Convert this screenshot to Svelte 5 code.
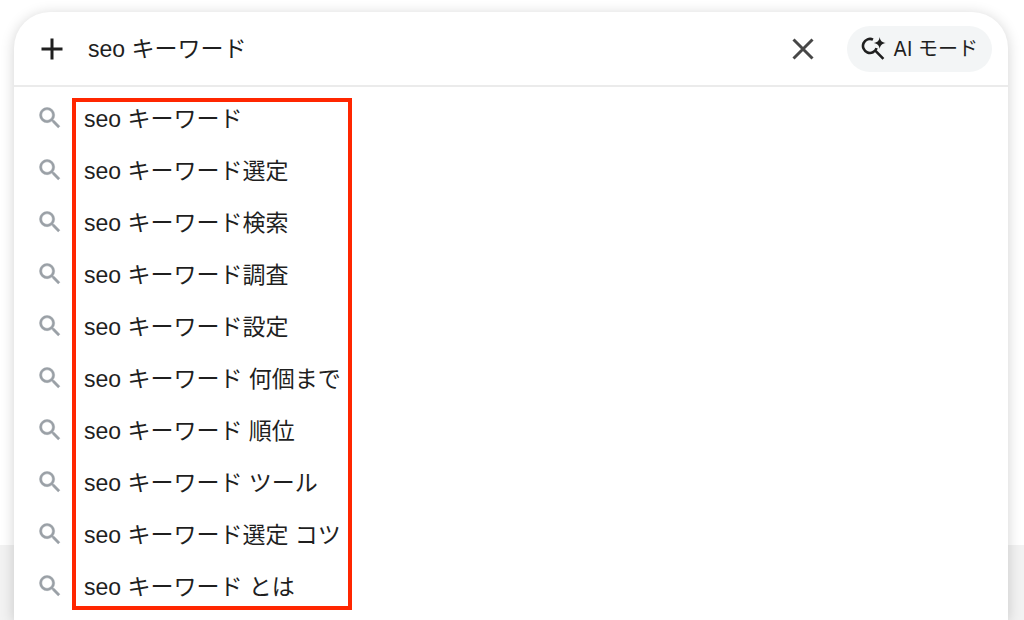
<script lang="ts">
  let query = $state('seo キーワード');

  const suggestions = [
    'seo キーワード',
    'seo キーワード選定',
    'seo キーワード検索',
    'seo キーワード調査',
    'seo キーワード設定',
    'seo キーワード 何個まで',
    'seo キーワード 順位',
    'seo キーワード ツール',
    'seo キーワード選定 コツ',
    'seo キーワード とは',
  ];
</script>

<div class="page">
  <div class="footer-band"></div>

  <main class="panel">
    <form class="bar" role="search" onsubmit={(e) => e.preventDefault()}>
      <button type="button" class="icon-btn" aria-label="追加">
        <svg width="24" height="24" viewBox="0 0 24 24">
          <path d="M12 1.5v21M1.5 12h21" stroke="#1f1f1f" stroke-width="3" />
        </svg>
      </button>
      <input type="text" aria-label="検索" autocomplete="off" bind:value={query} />
      <button type="button" class="icon-btn" aria-label="クリア" onclick={() => (query = '')}>
        <svg width="24" height="24" viewBox="0 0 24 24">
          <path d="M2.5 2.5l19 19M21.5 2.5l-19 19" stroke="#474747" stroke-width="3" />
        </svg>
      </button>
      <button type="button" class="ai">
        <svg width="26" height="26" viewBox="0 0 26 26">
          <path
            d="M12 3.6A7 7 0 1 0 15.6 12.2M13.8 14.2L22.4 22.8"
            fill="none"
            stroke="#1f1f1f"
            stroke-width="2.6"
          />
          <path
            d="M18.7 .9C19.2 4.6 20.8 6.2 24.8 7C20.8 7.8 19.2 9.4 18.7 13.1C18.2 9.4 16.6 7.8 12.6 7C16.6 6.2 18.2 4.6 18.7 .9Z"
            fill="#1f1f1f"
          />
        </svg>
        <span>AI モード</span>
      </button>
    </form>

    <div class="results">
      <ul>
        {#each suggestions as text (text)}
          <li>
            <button type="button" class="row" onclick={() => (query = text)}>
              <svg width="28" height="28" viewBox="0 0 24 24">
                <path
                  fill="#9aa0a6"
                  stroke="#9aa0a6"
                  stroke-width="0.4"
                  d="M15.5 14h-.79l-.28-.27A6.471 6.471 0 0 0 16 9.5 6.5 6.5 0 1 0 9.5 16c1.61 0 3.09-.59 4.23-1.57l.27.28v.79l5 4.99L20.49 19l-4.99-5zm-6 0C7.01 14 5 11.99 5 9.5S7.01 5 9.5 5 14 7.01 14 9.5 11.99 14 9.5 14z"
                />
              </svg>
              <span>{text}</span>
            </button>
          </li>
        {/each}
      </ul>
      <div class="marker"></div>
    </div>
  </main>
</div>

<style>
  :global(body) {
    background: #fff;
  }
  .page {
    position: relative;
    box-sizing: border-box;
    min-height: 100vh;
    padding: 12px 16px 0 14px;
    display: flex;
    overflow: hidden;
    font-family: 'Liberation Sans', 'Noto Sans CJK JP', sans-serif;
    color: #1f1f1f;
  }
  .footer-band {
    position: absolute;
    left: 0;
    right: 0;
    bottom: 0;
    height: 75px;
    background: #f2f2f2;
  }
  .panel {
    position: relative;
    flex: 1;
    min-width: 0;
    background: #fff;
    border-radius: 36px 36px 0 0;
    box-shadow: 0 2px 14px rgba(0, 0, 0, 0.18);
  }
  button {
    border: 0;
    padding: 0;
    background: none;
    color: inherit;
    font: inherit;
    cursor: pointer;
  }
  svg {
    display: block;
    flex: none;
  }
  .bar {
    display: flex;
    align-items: center;
    height: 73px;
    padding: 0 16px 0 26px;
    border-bottom: 2px solid #ebebeb;
  }
  .bar input {
    flex: 1;
    min-width: 0;
    margin-left: 24px;
    padding: 0;
    border: 0;
    outline: 0;
    background: none;
    color: inherit;
    font-family: inherit;
    font-size: 23px;
    line-height: 36px;
  }
  .ai {
    display: flex;
    align-items: center;
    gap: 6px;
    height: 46px;
    margin-left: 32px;
    padding: 0 14px;
    border-radius: 23px;
    background: #f3f5f6;
    font-family: Inter, 'Noto Sans CJK JP', sans-serif;
    font-size: 20px;
    line-height: 24px;
    white-space: nowrap;
  }
  .results {
    position: relative;
    padding: 5px 0 8px;
  }
  ul {
    list-style: none;
    margin: 0;
    padding: 0;
  }
  .row {
    display: flex;
    align-items: center;
    gap: 20px;
    width: 100%;
    height: 52px;
    padding: 0 22px;
    font-size: 23px;
    line-height: 36px;
    text-align: left;
    white-space: nowrap;
  }
  .row span {
    padding-top: 2px;
  }
  /* red frame around the suggestion texts */
  .marker {
    position: absolute;
    top: 11px;
    bottom: 10px;
    left: 58px;
    width: 280px;
    box-sizing: border-box;
    border: 4px solid #ff2600;
    pointer-events: none;
  }
</style>
